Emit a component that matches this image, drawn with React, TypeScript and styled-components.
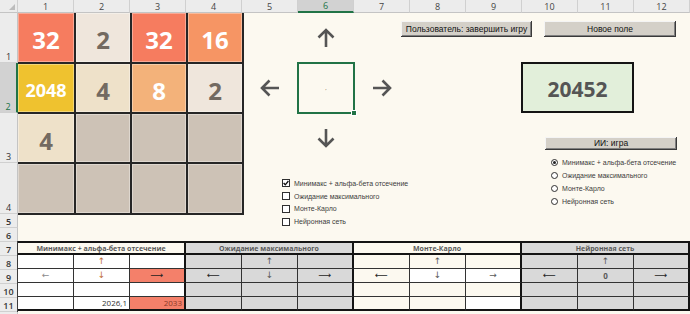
import React from "react";
import styled, { createGlobalStyle } from "styled-components";

const cream = "#fcf9f0";
const white = "#ffffff";
const gray = "#d9d9d9";
const salmon = "#f4806a";
const green = "#217346";

const GlobalStyle = createGlobalStyle`
  html, body {
    margin: 0;
    padding: 0;
    background: ${cream};
  }
  body {
    font-family: "Open Sans", "Liberation Sans", sans-serif;
  }
`;

const Sheet = styled.div`
  display: grid;
  grid-template-columns: 18px repeat(12, 56px);
  grid-template-rows: 13px 50px 50px 50px 51px repeat(8, 14px);
  width: 690px;
  height: 314px;
  overflow: hidden;
  background: ${cream};
`;

const Corner = styled.div`
  grid-column: 1;
  grid-row: 1;
  box-sizing: border-box;
  background: #ececec;
  border-right: 1px solid #d0d0d0;
  border-bottom: 1px solid #c4c4c4;
  display: flex;
  align-items: flex-end;
  justify-content: flex-end;
  padding: 0 2px 2px 0;

  &::after {
    content: "";
    border-left: 6px solid transparent;
    border-bottom: 6px solid #bcbcbc;
  }
`;

const ColHead = styled.div<{ $col: number; $active?: boolean }>`
  grid-column: ${(p) => p.$col + 1};
  grid-row: 1;
  box-sizing: border-box;
  display: flex;
  align-items: center;
  justify-content: center;
  font-size: 9px;
  line-height: 1;
  color: ${(p) => (p.$active ? green : "#444")};
  background: ${(p) => (p.$active ? "#d2d2d2" : "#ececec")};
  border-right: 1px solid #d0d0d0;
  border-bottom: ${(p) => (p.$active ? `2px solid ${green}` : "1px solid #c4c4c4")};
`;

const RowHead = styled.div<{ $row: number; $active?: boolean }>`
  grid-column: 1;
  grid-row: ${(p) => p.$row + 1};
  box-sizing: border-box;
  display: flex;
  align-items: flex-end;
  justify-content: center;
  padding-bottom: 1px;
  font-size: 9px;
  font-weight: ${(p) => (p.$row >= 5 ? 600 : 400)};
  line-height: 1;
  color: ${(p) => (p.$active ? green : "#333")};
  background: ${(p) => (p.$active ? "#d2d2d2" : "#ececec")};
  border-bottom: 1px solid #d0d0d0;
  border-right: ${(p) => (p.$active ? `2px solid ${green}` : "1px solid #c4c4c4")};
`;

/* ---------- game board ---------- */

const Board = styled.div`
  grid-column: 2 / span 4;
  grid-row: 2 / span 4;
  display: grid;
  grid-template-columns: 56px 54px 54px 54px;
  grid-template-rows: 49px 48px 48px 49px;
  gap: 2px;
  padding: 0 2px 2px 0;
  margin: 0 -2px -1px 0;
  background: #262626;
`;

const tileBg: Record<number, string> = {
  0: "#cdc2b6",
  2: "#efe6dc",
  4: "#eee1c9",
  8: "#f3b27a",
  16: "#f69564",
  32: "#f67c5f",
  2048: "#efc22f",
};

const Tile = styled.div<{ $v: number }>`
  display: flex;
  align-items: center;
  justify-content: center;
  padding-top: 4px;
  box-sizing: border-box;
  background: ${(p) => tileBg[p.$v]};
  box-shadow: inset 0 0 0 1px rgba(255, 255, 255, 0.35);
  font-family: "Open Sans", sans-serif;
  font-weight: 700;
  font-size: ${(p) => (p.$v >= 1000 ? "18px" : "24px")};
  color: ${(p) => (p.$v <= 4 ? "#736a61" : "#ffffff")};
`;

/* ---------- control area ---------- */

const ArrowCell = styled.div<{ $col: number; $row: number }>`
  grid-column: ${(p) => p.$col + 1};
  grid-row: ${(p) => p.$row + 1};
  display: flex;
  align-items: center;
  justify-content: center;
`;

const ArrowSvg = styled.svg<{ $deg: number }>`
  transform: rotate(${(p) => p.$deg}deg);
`;

const turn = { right: 0, down: 90, left: 180, up: 270 };

function BigArrow({ dir }: { dir: keyof typeof turn }) {
  return (
    <ArrowSvg $deg={turn[dir]} width="20" height="18" viewBox="0 0 20 18">
      <path d="M1 9H18.5M10.5 1.5L18 9L10.5 16.5" stroke="#555" strokeWidth="2.6" fill="none" />
    </ArrowSvg>
  );
}

const Selection = styled.div`
  grid-column: 7;
  grid-row: 3;
  margin: -1px;
  border: 2px solid ${green};
  position: relative;
  display: flex;
  align-items: center;
  justify-content: center;
  font-size: 6px;
  color: #8a6b3e;

  &::after {
    content: "";
    position: absolute;
    right: -4px;
    bottom: -4px;
    width: 4px;
    height: 4px;
    background: ${green};
    border: 1px solid #fff;
  }
`;

const ScoreBox = styled.div`
  grid-column: 11 / span 2;
  grid-row: 3;
  margin: -1px 0 0 -1px;
  border: 2px solid #141414;
  background: #e2efda;
  display: flex;
  align-items: center;
  justify-content: center;
  padding-top: 2px;
  font-family: "Open Sans", sans-serif;
  font-weight: 700;
  font-size: 21px;
  color: #555;
`;

const ButtonBar = styled.div`
  grid-column: 8 / span 6;
  grid-row: 2;
  display: flex;
  align-items: flex-start;
  gap: 12px;
  padding: 8px 0 0 47px;
`;

const FormButton = styled.button<{ $w: number; $h: number }>`
  width: ${(p) => p.$w}px;
  height: ${(p) => p.$h}px;
  padding: 0;
  border: none;
  background: #d4d0c8;
  box-shadow: inset -1px -1px 0 #3a3a3a, inset 1px 1px 0 #f4f4f4, inset -2px -2px 0 #808080;
  font-family: "Liberation Sans", sans-serif;
  font-size: 8.5px;
  color: #111;
  line-height: 1;
`;

const CheckList = styled.div`
  grid-column: 6 / span 3;
  grid-row: 4 / span 3;
  display: flex;
  flex-direction: column;
  padding: 64px 0 0 40px;
`;

const OptionRow = styled.div<{ $h: number }>`
  height: ${(p) => p.$h}px;
  display: flex;
  align-items: center;
  gap: 4px;
  font-family: "Liberation Sans", sans-serif;
  font-size: 7px;
  color: #3c3c3c;
  white-space: nowrap;
`;

const CheckBox = styled.span`
  width: 8px;
  height: 8px;
  box-sizing: border-box;
  background: #fff;
  border: 1px solid #2f2f2f;
  display: flex;
  align-items: center;
  justify-content: center;
`;

const RadioDot = styled.span<{ $on?: boolean }>`
  width: 7px;
  height: 7px;
  box-sizing: border-box;
  border-radius: 50%;
  background: #fff;
  border: 1px solid #2f2f2f;
  display: flex;
  align-items: center;
  justify-content: center;

  &::after {
    content: "";
    width: 3px;
    height: 3px;
    border-radius: 50%;
    background: ${(p) => (p.$on ? "#222" : "transparent")};
  }
`;

const AiPanel = styled.div`
  grid-column: 11 / span 3;
  grid-row: 4 / span 2;
  display: flex;
  flex-direction: column;
  padding: 24px 0 0 23px;
`;

const RadioList = styled.div`
  display: flex;
  flex-direction: column;
  margin-top: 6px;
  padding-left: 6px;
`;

/* ---------- results table ---------- */

const AiTable = styled.div`
  grid-column: 2 / span 12;
  grid-row: 8 / span 5;
  display: grid;
  grid-template-columns: repeat(12, 56px);
  grid-template-rows: repeat(5, 14px);
  margin: -1px 0 0 -1px;
  border-left: 1px solid #3c3c3c;
`;

const GroupHead = styled.div<{ $bg: string }>`
  grid-column: span 3;
  box-sizing: border-box;
  background: ${(p) => p.$bg};
  border-top: 2px solid #141414;
  border-bottom: 2px solid #141414;
  border-right: 2px solid #141414;
  display: flex;
  align-items: center;
  justify-content: center;
  font-family: "Open Sans", sans-serif;
  font-weight: 700;
  font-size: 7px;
  color: #5a5a5a;
`;

const TCell = styled.div<{ $bg: string; $end?: boolean; $last?: boolean; $right?: boolean; $color?: string; $num?: boolean; $bold?: boolean }>`
  box-sizing: border-box;
  background: ${(p) => p.$bg};
  border-right: ${(p) => (p.$end ? "2px solid #141414" : "1px solid #333")};
  border-bottom: ${(p) => (p.$last ? "2px solid #141414" : "1px solid #333")};
  display: flex;
  align-items: center;
  justify-content: ${(p) => (p.$right ? "flex-end" : "center")};
  padding: 0 2px;
  font-family: ${(p) => (p.$num ? '"Open Sans", sans-serif' : '"DejaVu Sans", sans-serif')};
  font-size: ${(p) => (p.$num ? "8px" : "9px")};
  font-weight: ${(p) => (p.$bold ? 700 : 400)};
  color: ${(p) => p.$color ?? "#5a5a5a"};
  line-height: 1;
`;

type Cell = { t?: string; bg: string; c?: string; r?: boolean; n?: boolean; b?: boolean };

const orange = "#c0703a";
const dark = "#1e1e1e";

const groups: { title: string; head: string; rows: Cell[][] }[] = [
  {
    title: "Минимакс + альфа-бета отсечение",
    head: cream,
    rows: [
      [{ bg: white }, { bg: white, t: "↑", c: orange }, { bg: white }],
      [{ bg: white, t: "←", c: "#8c8c8c" }, { bg: white, t: "↓", c: orange }, { bg: salmon, t: "⟶", c: dark }],
      [{ bg: white }, { bg: white }, { bg: white }],
      [{ bg: white }, { bg: white, t: "2026,1", r: true, n: true, c: "#333" }, { bg: salmon, t: "2033", r: true, n: true, c: "#8a3a28" }],
    ],
  },
  {
    title: "Ожидание максимального",
    head: gray,
    rows: [
      [{ bg: gray }, { bg: gray, t: "↑" }, { bg: gray }],
      [{ bg: gray, t: "⟵", c: dark }, { bg: gray, t: "↓" }, { bg: gray, t: "⟶", c: dark }],
      [{ bg: gray }, { bg: gray }, { bg: gray }],
      [{ bg: gray }, { bg: gray }, { bg: gray }],
    ],
  },
  {
    title: "Монте-Карло",
    head: cream,
    rows: [
      [{ bg: cream }, { bg: cream, t: "↑" }, { bg: cream }],
      [{ bg: cream, t: "⟵", c: dark }, { bg: white, t: "↓" }, { bg: white, t: "→" }],
      [{ bg: cream }, { bg: cream }, { bg: cream }],
      [{ bg: cream }, { bg: cream }, { bg: white }],
    ],
  },
  {
    title: "Нейронная сеть",
    head: gray,
    rows: [
      [{ bg: gray }, { bg: gray, t: "↑" }, { bg: gray }],
      [{ bg: gray, t: "⟵", c: dark }, { bg: gray, t: "0", n: true, b: true }, { bg: gray, t: "⟶", c: dark }],
      [{ bg: gray }, { bg: gray }, { bg: gray }],
      [{ bg: gray }, { bg: gray }, { bg: gray }],
    ],
  },
];

const board = [
  [32, 2, 32, 16],
  [2048, 4, 8, 2],
  [4, 0, 0, 0],
  [0, 0, 0, 0],
];

const algorithms = [
  "Минимакс + альфа-бета отсечение",
  "Ожидание максимального",
  "Монте-Карло",
  "Нейронная сеть",
];

export default function App() {
  return (
    <>
      <GlobalStyle />
      <Sheet>
        <Corner />
        {Array.from({ length: 12 }, (_, i) => (
          <ColHead key={i} $col={i + 1} $active={i + 1 === 6}>
            {i + 1}
          </ColHead>
        ))}
        {Array.from({ length: 12 }, (_, i) => (
          <RowHead key={i} $row={i + 1} $active={i + 1 === 2}>
            {i < 11 ? i + 1 : ""}
          </RowHead>
        ))}

        <Board>
          {board.flat().map((v, i) => (
            <Tile key={i} $v={v}>
              {v > 0 ? v : ""}
            </Tile>
          ))}
        </Board>

        <ArrowCell $col={6} $row={1}>
          <BigArrow dir="up" />
        </ArrowCell>
        <ArrowCell $col={5} $row={2}>
          <BigArrow dir="left" />
        </ArrowCell>
        <ArrowCell $col={7} $row={2}>
          <BigArrow dir="right" />
        </ArrowCell>
        <ArrowCell $col={6} $row={3}>
          <BigArrow dir="down" />
        </ArrowCell>
        <Selection>,</Selection>

        <ButtonBar>
          <FormButton $w={131} $h={16}>Пользователь: завершить игру</FormButton>
          <FormButton $w={132} $h={16}>Новое поле</FormButton>
        </ButtonBar>

        <ScoreBox>20452</ScoreBox>

        <CheckList>
          {algorithms.map((a, i) => (
            <OptionRow key={a} $h={13.5}>
              <CheckBox>
                {i === 0 && (
                  <svg width="6" height="6" viewBox="0 0 6 6">
                    <path d="M0.6 3L2.3 4.8L5.4 1" stroke="#111" strokeWidth="1.3" fill="none" />
                  </svg>
                )}
              </CheckBox>
              {a}
            </OptionRow>
          ))}
        </CheckList>

        <AiPanel>
          <FormButton $w={132} $h={13}>ИИ: игра</FormButton>
          <RadioList>
            {algorithms.map((a, i) => (
              <OptionRow key={a} $h={13}>
                <RadioDot $on={i === 0} />
                {a}
              </OptionRow>
            ))}
          </RadioList>
        </AiPanel>

        <AiTable>
          {groups.map((g) => (
            <GroupHead key={g.title} $bg={g.head}>
              {g.title}
            </GroupHead>
          ))}
          {[0, 1, 2, 3].map((r) =>
            groups.map((g, gi) =>
              g.rows[r].map((c, ci) => (
                <TCell
                  key={`${r}-${gi}-${ci}`}
                  $bg={c.bg}
                  $end={ci === 2}
                  $last={r === 3}
                  $right={c.r}
                  $color={c.c}
                  $num={c.n}
                  $bold={c.b}
                >
                  {c.t}
                </TCell>
              ))
            )
          )}
        </AiTable>
      </Sheet>
    </>
  );
}
